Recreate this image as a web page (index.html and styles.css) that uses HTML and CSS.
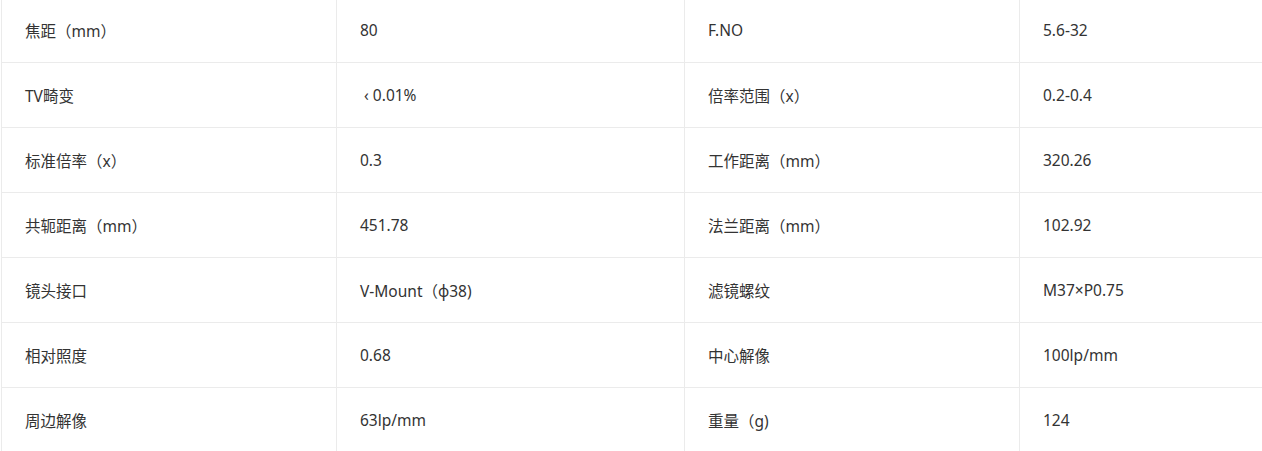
FILE: index.html
```html
<!DOCTYPE html>
<html lang="zh-CN">
<head>
<meta charset="utf-8">
<link rel="stylesheet" href="styles.css">
</head>
<body>
<table class="spec">
  <colgroup>
    <col class="c1"><col class="c2"><col class="c3"><col class="c4">
  </colgroup>
  <tbody>
    <tr><td>焦距（mm）</td><td>80</td><td>F.NO</td><td>5.6-32</td></tr>
    <tr><td>TV畸变</td><td>&nbsp;‹ 0.01%</td><td>倍率范围（x）</td><td>0.2-0.4</td></tr>
    <tr><td>标准倍率（x）</td><td>0.3</td><td>工作距离（mm）</td><td>320.26</td></tr>
    <tr><td>共轭距离（mm）</td><td>451.78</td><td>法兰距离（mm）</td><td>102.92</td></tr>
    <tr><td>镜头接口</td><td>V-Mount（φ38)</td><td>滤镜螺纹</td><td>M37×P0.75</td></tr>
    <tr><td>相对照度</td><td>0.68</td><td>中心解像</td><td>100lp/mm</td></tr>
    <tr><td>周边解像</td><td>63lp/mm</td><td>重量（g)</td><td>124</td></tr>
  </tbody>
</table>
</body>
</html>
```
FILE: styles.css
```css
html, body {
  margin: 0;
  padding: 0;
  background: #fff;
  overflow: hidden;
}
.spec {
  border-collapse: collapse;
  table-layout: fixed;
  width: 1266px;
  margin: -3px 0 0 1px;
  font-family: "Noto Sans", "Noto Sans CJK SC", sans-serif;
  font-size: 15.5px;
  color: #333;
}
.c1 { width: 335px; }
.c2 { width: 348px; }
.c3 { width: 335px; }
.c4 { width: 248px; }
.spec td {
  border: 1px solid #ebebeb;
  height: 65px;
  padding: 0 23px;
  box-sizing: border-box;
  vertical-align: middle;
  white-space: nowrap;
}
.spec td:nth-child(odd) { padding-top: 0; }
```
